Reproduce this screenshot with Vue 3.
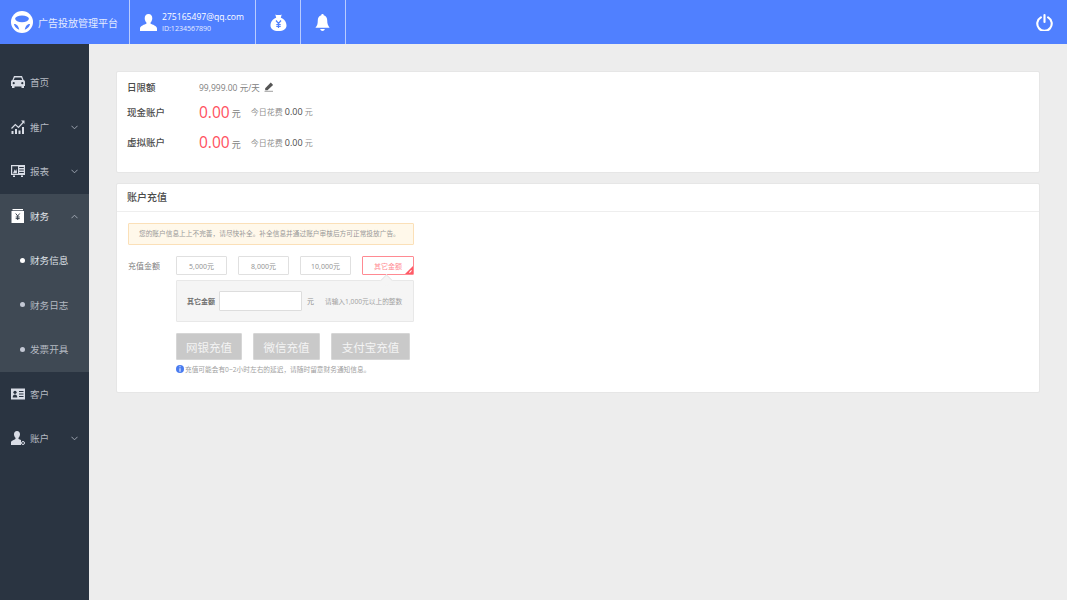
<script setup>
const menu = [
  { label: '首页', icon: 'car' },
  { label: '推广', icon: 'chart', arrow: 'down' },
  { label: '报表', icon: 'report', arrow: 'down' },
  { label: '财务', icon: 'finance', arrow: 'up', open: true, children: ['财务信息', '财务日志', '发票开具'] },
  { label: '客户', icon: 'card' },
  { label: '账户', icon: 'user', arrow: 'down' }
]
const amounts = ['5,000元', '8,000元', '10,000元']
const payments = ['网银充值', '微信充值', '支付宝充值']
</script>

<template>
  <div class="page">
    <header class="top">
      <div class="brand">
        <svg class="logo" viewBox="0 0 24 24">
          <circle cx="12" cy="12" r="12" fill="#fff"/>
          <ellipse cx="12" cy="8.5" rx="7.5" ry="3.7" fill="#5080ff"/>
          <path d="M3.200 14.200C5.500 14 8 15.500 9 20.500 6 19.500 3.800 17.200 3.200 14.200zM20.800 14.200C18.500 14 16 15.500 15 20.500 18 19.500 20.200 17.200 20.800 14.200z" fill="#5080ff"/>
        </svg>
        <span>广告投放管理平台</span>
      </div>
      <div class="cell user">
        <svg class="uicon" viewBox="0 0 18 18"><path d="M9 0c2.600 0 4 1.900 4 4.400 0 1.700-.7 3.500-1.800 4.500v1.300c1.800.9 6.800 2 6.800 5.100V18H0v-2.700c0-3.100 5-4.200 6.800-5.100V8.900C5.700 7.900 5 6.100 5 4.400 5 1.900 6.400 0 9 0z" fill="#fff"/></svg>
        <div class="who"><b>275165497@qq.com</b><small>ID:1234567890</small></div>
      </div>
      <div class="cell square">
        <svg width="17" height="17" viewBox="0 0 16 17"><path d="M4.800.5C6 1.300 10 1.300 11.200.5L10.300 3.700C13.700 4.700 16 8 16 11.500 16 15 13 17 8 17S0 15 0 11.500C0 8 2.300 4.700 5.700 3.700z" fill="#fff"/><path d="M5.500 6.500L8 9.500l2.500-3M8 9.500V14M5.800 10.500h4.400M5.800 12.300h4.400" fill="none" stroke="#5080ff" stroke-width="1.200"/></svg>
      </div>
      <div class="cell square">
        <svg width="15" height="17" viewBox="0 0 15 18"><path d="M7.500 0c.8 0 1.300.5 1.300 1.300C11.400 2 12.500 4 12.500 7c0 3.500.8 5.400 2.500 7.500H0C1.700 12.900 2.500 11 2.500 7c0-3 1.100-5 3.700-5.700C6.200.5 6.700 0 7.500 0z" fill="#fff"/><path d="M5 16h5c-.4 1.300-1.400 2-2.500 2S5.400 17.300 5 16z" fill="#fff"/></svg>
      </div>
      <div class="spacer"></div>
      <svg class="power" viewBox="0 0 16 16"><path d="M4.600 3.200a6.800 6.800 0 1 0 6.800 0" fill="none" stroke="#fff" stroke-width="2" stroke-linecap="round"/><path d="M8 1v6.500" stroke="#fff" stroke-width="2" stroke-linecap="round"/></svg>
    </header>

    <div class="body">
      <aside class="side">
        <div class="menu">
          <div v-for="m in menu" :key="m.label" :class="['group', { open: m.open }]">
            <div class="item">
              <svg class="micon" viewBox="0 0 14 14">
                <template v-if="m.icon === 'car'"><path d="M3 1h8l1.600 4c.9.300 1.400.9 1.400 1.900V11h-1v2h-2.500v-1.500h-7V13H1v-2H0V6.900C0 5.900.5 5.300 1.400 5zM3.800 2.400L2.700 5h8.600l-1.100-2.600z" fill="#d9dde6" fill-rule="evenodd"/><circle cx="2.700" cy="8.200" r="1.100" fill="#2a3441"/><circle cx="11.300" cy="8.200" r="1.100" fill="#2a3441"/></template>
                <template v-else-if="m.icon === 'chart'"><path d="M.5 11h2v3h-2zM4 9h2v5H4zM7.500 10.500h2V14h-2zM11 7h2v7h-2z" fill="#d9dde6"/><path d="M.5 8.500L4.300 4.500l3.200 3L12.500 2" fill="none" stroke="#d9dde6" stroke-width="1.200"/><path d="M10 .5h3.500V4z" fill="#d9dde6"/></template>
                <template v-else-if="m.icon === 'report'"><path d="M0 1h14v10H0zM1.200 2.300v7.400h5.800V2.300zM8.200 3h4.600v1H8.200zM8.200 5.500h4.600v1H8.200zM8.200 8h4.600v1H8.200zM2 11.500h2V13H2zM10 11.500h2V13h-2z" fill="#d9dde6" fill-rule="evenodd"/><path d="M2 9.300l1.800-4 1.200 2 .9-2.800v4.800z" fill="#d9dde6"/></template>
                <template v-else-if="m.icon === 'finance'"><path d="M1.500 0h10.500v1.200H1.500zM.5 2h12.500v12H.5z" fill="#fff"/><path d="M4.700 4.500l2 2.500 2-2.500M6.700 7v4M4.700 8h4M4.700 9.600h4" fill="none" stroke="#2a3441" stroke-width=".9"/></template>
                <template v-else-if="m.icon === 'card'"><path d="M0 1.500h14v11H0z" fill="#d9dde6"/><circle cx="4" cy="5.300" r="1.600" fill="#2a3441"/><path d="M1.700 10.500c0-2 1-3 2.300-3s2.300 1 2.300 3zM8 4h4.500v1.100H8zM8 6.500h4.500v1.100H8zM8 9h4.500v1.100H8z" fill="#2a3441"/></template>
                <template v-else><path d="M6 0c1.900 0 3 1.300 3 3.200C9 4.700 8.300 6 7.500 6.800V8L10 9v5H0v-2.500C0 9.500 3.300 9 4.500 8V6.800C3.700 6 3 4.700 3 3.200 3 1.300 4.100 0 6 0z" fill="#d9dde6"/><circle cx="12" cy="12" r="1.500" fill="#2a3441" stroke="#d9dde6" stroke-width="1"/></template>
              </svg>
              <span>{{ m.label }}</span>
              <svg v-if="m.arrow" class="arrow" viewBox="0 0 8 5"><path :d="m.arrow === 'up' ? 'M.5 4.500L4 1l3.500 3.500' : 'M.5.500L4 4 7.500.500'" fill="none" stroke="#aab1bd" stroke-width="1"/></svg>
            </div>
            <div v-for="(c, i) in m.children" :key="c" :class="['sub', { on: i === 0 }]"><i></i><span>{{ c }}</span></div>
          </div>
        </div>
      </aside>

      <main class="main">
        <section class="card info">
          <div class="row limit">
            <strong class="label">日限额</strong>
            <span class="limit-val">99,999.00 元/天</span>
            <svg class="pen" viewBox="0 0 10 10"><path d="M6.800.6l2.300 2.300-5.600 5.300H1.200V6.200z" fill="#555"/><path d="M.5 9.300h8.500" stroke="#777" stroke-width=".7"/></svg>
          </div>
          <div class="row money">
            <strong class="label">现金账户</strong>
            <span class="big">0.00</span><span class="yuan">元</span>
            <span class="today">今日花费 <b>0.00</b> 元</span>
          </div>
          <div class="row money">
            <strong class="label">虚拟账户</strong>
            <span class="big">0.00</span><span class="yuan">元</span>
            <span class="today">今日花费 <b>0.00</b> 元</span>
          </div>
        </section>

        <section class="card recharge">
          <h2>账户充值</h2>
          <div class="content">
            <div class="notice">您的账户信息上上不完善，请尽快补全。补全信息并通过账户审核后方可正常投放广告。</div>
            <div class="amount-row">
              <span class="amount-label">充值金额</span>
              <div class="amounts">
                <button v-for="a in amounts" :key="a" class="amt">{{ a }}</button>
                <button class="amt active">其它金额</button>
              </div>
            </div>
            <div class="other">
              <b>其它金额</b>
              <input class="field" type="text" />
              <span class="unit">元</span>
              <span class="hint">请输入1,000元以上的整数</span>
            </div>
            <div class="pays">
              <button v-for="p in payments" :key="p" class="pay">{{ p }}</button>
            </div>
            <div class="tip">
              <svg width="8" height="8" viewBox="0 0 8 8"><circle cx="4" cy="4" r="4" fill="#4a7cf0"/><path d="M3.500 1.300h1v1h-1zM3.500 3.200h1v3.500h-1z" fill="#fff"/></svg>
              <span>充值可能会有0~2小时左右的延迟，请随时留意财务通知信息。</span>
            </div>
          </div>
        </section>
      </main>
    </div>
  </div>
</template>

<style>
html, body { margin: 0; padding: 0; background: #ededed; }
</style>

<style scoped>
.page { width: 1067px; height: 600px; overflow: hidden; display: flex; flex-direction: column; font-family: "Open Sans", "Noto Sans CJK SC", sans-serif; background: #ededed; color: #444; }
.top { height: 44px; flex: none; background: #5080ff; display: flex; align-items: stretch; color: #fff; }
.brand { width: 129px; flex: none; display: flex; align-items: center; box-sizing: border-box; padding-left: 11px; font-size: 10px; gap: 5px; white-space: nowrap; color: #e4ebff; }
.logo { width: 22px; height: 22px; flex: none; }
.cell { border-left: 1px solid #b9ccff; display: flex; align-items: center; justify-content: center; flex: none; box-sizing: border-box; }
.user { width: 126px; justify-content: flex-start; padding-left: 10px; gap: 5px; }
.uicon { width: 17px; height: 17px; flex: none; }
.who { display: flex; flex-direction: column; }
.who b { font-weight: 400; font-size: 8.600px; line-height: 12px; }
.who small { font-size: 7px; line-height: 10px; margin-top: 1px; color: #e8eeff; }
.square { width: 45px; }
.square + .square { border-right: 1px solid #b9ccff; width: 46px; padding-right: 1px; }
.spacer { flex: 1; }
.power { width: 17px; height: 17px; align-self: center; margin-right: 14px; }

.body { flex: 1; display: flex; min-height: 0; }
.side { width: 89px; flex: none; background: #2a3441; padding-top: 16px; box-sizing: border-box; }
.menu { display: flex; flex-direction: column; }
.group.open { background: #3f4954; }
.item, .sub { height: 44.500px; display: flex; align-items: center; font-size: 9.600px; color: #b4b9c2; }
.item { padding-left: 11px; position: relative; }
.group.open .item { color: #e2e5ea; }
.micon { width: 14px; height: 14px; margin-right: 5px; flex: none; }
.arrow { position: absolute; left: 71px; top: 20px; width: 7px; height: 5px; }
.sub { padding-left: 20px; gap: 5px; }
.sub i { width: 5px; height: 5px; border-radius: 50%; background: #c3c8d4; flex: none; }
.sub.on { color: #dfe2e8; }
.sub.on i { background: #fff; }

.main { flex: 1; padding: 27px 27px 0; display: flex; flex-direction: column; gap: 10px; min-width: 0; }
.card { background: #fff; border: 1px solid #e6e6e6; border-radius: 2px; box-sizing: border-box; }
.info { height: 102px; padding: 8px 10px 0; }
.row { display: flex; align-items: center; }
.label { width: 72px; flex: none; font-size: 9.500px; font-weight: 500; color: #4a4a4a; }
.limit { height: 14px; margin-bottom: 2.500px; }
.limit-val { font-size: 8.500px; color: #808080; }
.pen { width: 10px; height: 10px; margin-left: 4px; }
.money { height: 30.500px; }
.money .big { font-size: 15.500px; color: #ff5060; }
.money .yuan { font-size: 9px; color: #808080; margin: 4px 0 0 2px; }
.today { font-size: 8px; color: #909090; margin-left: 10px; }
.today b { font-size: 9px; font-weight: 500; color: #4a4a4a; }

.recharge { height: 210px; }
h2 { margin: 0; height: 27px; line-height: 27px; padding: 0 10px; font-size: 10px; font-weight: 500; color: #4a4a4a; border-bottom: 1px solid #eee; }
.content { padding: 11px 11px 0; }
.notice { width: 286px; height: 22px; box-sizing: border-box; line-height: 20px; padding-left: 10px; font-size: 6.700px; white-space: nowrap; color: #999; background: #fff8ea; border: 1px solid #fbe0b8; border-radius: 1px; }
.amount-row { display: flex; align-items: center; margin-top: 11px; height: 19px; }
.amount-label { width: 48px; flex: none; font-size: 8px; color: #808080; }
.amounts { display: flex; gap: 11px; }
.amt { width: 51px; height: 19px; padding: 0; box-sizing: border-box; background: #fff; border: 1px solid #e0e0e0; border-radius: 1px; font: inherit; font-size: 7px; color: #909090; white-space: nowrap; position: relative; }
.amt.active { width: 52px; border-color: #ff8a92; color: #ff8a92; }
.amt.active::after { content: ""; position: absolute; right: 0; bottom: 0; border-style: solid; border-width: 0 0 8px 8px; border-color: transparent transparent #ff5a66 transparent; }
.amt.active::before { content: ""; position: absolute; z-index: 1; right: 1px; bottom: 2px; width: 3px; height: 1px; background: #fff; transform: rotate(-45deg); }
.other { position: relative; width: 238px; height: 42px; box-sizing: border-box; margin: 5px 0 0 48px; padding: 0 10px; background: #f5f5f5; border: 1px solid #e8e8e8; border-radius: 1px; display: flex; align-items: center; font-size: 7px; color: #909090; white-space: nowrap; }
.other::before { content: ""; position: absolute; right: 22px; top: -5px; width: 8px; height: 8px; background: #f5f5f5; border-left: 1px solid #e8e8e8; border-top: 1px solid #e8e8e8; transform: rotate(45deg); }
.other b { font-weight: 700; color: #707070; width: 32px; flex: none; }
.field { width: 83px; height: 20px; box-sizing: border-box; background: #fff; border: 1px solid #ddd; border-radius: 1px; padding: 0; flex: none; }
.unit { margin-left: 5px; }
.hint { margin-left: 11px; font-size: 6.700px; color: #a0a0a0; }
.pays { display: grid; grid-template-columns: 66px 67px 79px; gap: 11px; margin: 11px 0 0 48px; }
.pay { height: 27px; padding: 0; background: #c9c9c9; border: 1px solid #d6d6d6; border-radius: 1px; color: #f4f4f4; font: inherit; font-size: 11.500px; white-space: nowrap; }
.tip { display: flex; align-items: center; gap: 1px; margin: 3px 0 0 48px; height: 11px; font-size: 6.700px; color: #a0a0a0; white-space: nowrap; }
</style>
